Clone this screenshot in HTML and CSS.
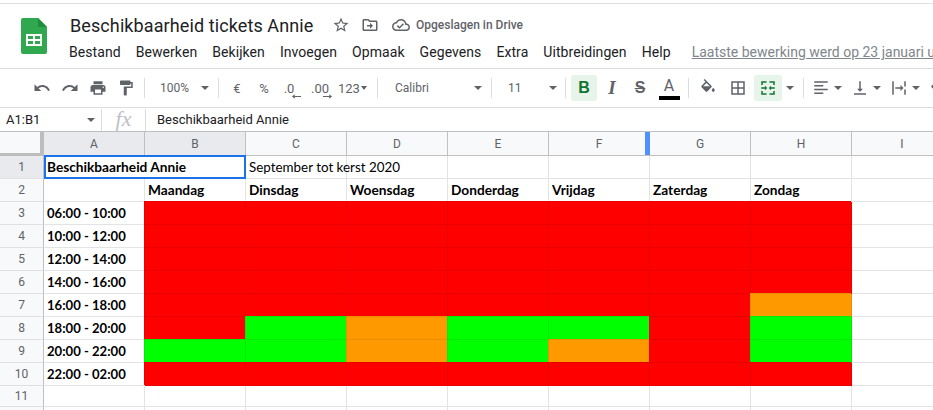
FILE: index.html
```html
<!DOCTYPE html>
<html lang="nl">
<head>
<meta charset="utf-8">
<title>Beschikbaarheid tickets Annie</title>
<link rel="stylesheet" href="styles.css">
</head>
<body>
<svg class="defs" aria-hidden="true">
<symbol id="undo" viewBox="0 0 24 24"><path d="M12.5 8c-2.65 0-5.05.99-6.9 2.6L2 7v9h9l-3.62-3.62c1.39-1.16 3.16-1.88 5.12-1.88 3.54 0 6.55 2.31 7.6 5.5l2.37-.78C21.08 11.03 17.15 8 12.5 8z"/></symbol>
<symbol id="redo" viewBox="0 0 24 24"><path d="M18.4 10.6C16.55 8.99 14.15 8 11.5 8c-4.65 0-8.58 3.03-9.96 7.22L3.9 16c1.05-3.19 4.05-5.5 7.6-5.5 1.95 0 3.73.72 5.12 1.88L13 16h9V7l-3.6 3.6z"/></symbol>
<symbol id="print" viewBox="0 0 24 24"><path d="M19 8H5c-1.66 0-3 1.34-3 3v6h4v4h12v-4h4v-6c0-1.66-1.34-3-3-3zm-3 11H8v-5h8v5zm3-7c-.55 0-1-.45-1-1s.45-1 1-1 1 .45 1 1-.45 1-1 1zm-1-9H6v4h12V3z"/></symbol>
<symbol id="paint" viewBox="0 0 24 24"><path d="M18 4V3c0-.55-.45-1-1-1H5c-.55 0-1 .45-1 1v4c0 .55.45 1 1 1h12c.55 0 1-.45 1-1V6h1v4H9v11c0 .55.45 1 1 1h2c.55 0 1-.45 1-1v-9h8V4h-3z"/></symbol>
<symbol id="star" viewBox="0 0 24 24"><path d="M22 9.24l-7.19-.62L12 2 9.19 8.63 2 9.24l5.46 4.73L5.82 21 12 17.27 18.18 21l-1.63-7.03L22 9.24zM12 15.4l-3.76 2.27 1-4.28-3.32-2.88 4.38-.38L12 6.1l1.71 4.04 4.38.38-3.32 2.88 1 4.28L12 15.4z"/></symbol>
<symbol id="move" viewBox="0 0 24 24"><path d="M20 6h-8l-2-2H4c-1.1 0-2 .9-2 2v12c0 1.1.9 2 2 2h16c1.1 0 2-.9 2-2V8c0-1.1-.9-2-2-2zm0 12H4V6h5.17l2 2H20v10zm-8-1l4-4-4-4v3H8v2h4v3z"/></symbol>
<symbol id="cloud" viewBox="0 0 24 24"><path d="M19.35 10.04C18.67 6.59 15.64 4 12 4 9.11 4 6.6 5.64 5.35 8.04 2.34 8.36 0 10.91 0 14c0 3.31 2.69 6 6 6h13c2.76 0 5-2.24 5-5 0-2.64-2.05-4.78-4.65-4.96zM19 18H6c-2.21 0-4-1.79-4-4 0-2.05 1.53-3.76 3.56-3.97l1.07-.11.5-.95C8.08 7.14 9.94 6 12 6c2.62 0 4.88 1.86 5.39 4.43l.3 1.5 1.53.11c1.56.1 2.78 1.41 2.78 2.96 0 1.65-1.35 3-3 3zm-9-3.82l-2.09-2.09L6.5 13.5 10 17l6.01-6.01-1.41-1.41z"/></symbol>
<symbol id="fill" viewBox="0 0 24 24"><path d="M16.56 8.94L7.62 0 6.21 1.41l2.38 2.38-5.15 5.15c-.59.59-.59 1.54 0 2.12l5.5 5.5c.29.29.68.44 1.06.44s.77-.15 1.06-.44l5.5-5.5c.59-.58.59-1.53 0-2.12zM5.21 10L10 5.21 14.79 10H5.21zM19 11.5s-2 2.17-2 3.5c0 1.1.9 2 2 2s2-.9 2-2c0-1.33-2-3.5-2-3.5z"/><path d="M4.5 10h11l-5.5 5.8z"/></symbol>
<symbol id="borders" viewBox="0 0 24 24"><path d="M3 3v18h18V3H3zm8 16H5v-6h6v6zm0-8H5V5h6v6zm8 8h-6v-6h6v6zm0-8h-6V5h6v6z"/></symbol>
<symbol id="merge" viewBox="0 0 24 24"><path d="M3 3h7v2H5v3H3zM14 3h7v5h-2V5h-5zM3 16h2v3h5v2H3zM19 16h2v5h-7v-2h5zM3 11h5V9l3 3-3 3v-2H3zM21 11h-5V9l-3 3 3 3v-2h5z"/></symbol>
<symbol id="align" viewBox="0 0 24 24"><path d="M3 3h18v2H3zM3 8h12v2H3zM3 13h18v2H3zM3 18h12v2H3z"/></symbol>
<symbol id="valign" viewBox="0 0 24 24"><path d="M11 3h2v10h3l-4 4-4-4h3zM4 19h16v2H4z"/></symbol>
<symbol id="wrap" viewBox="0 0 24 24"><path d="M3 3h2v18H3zM19 3h2v7h-2zM19 14h2v7h-2zM7 11h7V8l4 4-4 4v-3H7z"/></symbol>
</svg>

<header class="top">
  <svg class="logo" viewBox="0 0 26 36" aria-hidden="true">
    <path class="logo-sheet" d="M2 0h15l9 9v25a2 2 0 0 1-2 2H2a2 2 0 0 1-2-2V2a2 2 0 0 1 2-2z"/>
    <path class="logo-fold" d="M17 0l9 9h-9z"/>
    <path class="logo-grid" d="M5 16h16v12H5zm2 2v3h5v-3zm7 0v3h5v-3zm-7 5v3h5v-3zm7 0v3h5v-3z"/>
  </svg>
  <div class="head-main">
    <div class="title-row">
      <span class="title">Beschikbaarheid tickets Annie</span>
      <svg class="i i-star"><use href="#star"/></svg>
      <svg class="i i-move"><use href="#move"/></svg>
      <svg class="i i-cloud"><use href="#cloud"/></svg>
      <span class="saved">Opgeslagen in Drive</span>
    </div>
    <nav class="menu">
      <span>Bestand</span><span>Bewerken</span><span>Bekijken</span><span>Invoegen</span><span>Opmaak</span><span>Gegevens</span><span>Extra</span><span>Uitbreidingen</span><span>Help</span>
      <a class="last-edit">Laatste bewerking werd op 23 januari u</a>
    </nav>
  </div>
</header>

<div class="toolbar">
  <div class="tb"><svg class="i"><use href="#undo"/></svg></div>
  <div class="tb"><svg class="i"><use href="#redo"/></svg></div>
  <div class="tb"><svg class="i"><use href="#print"/></svg></div>
  <div class="tb"><svg class="i"><use href="#paint"/></svg></div>
  <div class="sep"></div>
  <div class="drop d-zoom"><span>100%</span><i class="arrow"></i></div>
  <div class="sep"></div>
  <div class="tb t-txt">€</div>
  <div class="tb t-txt t-narrow">%</div>
  <div class="tb t-dec"><span class="dec-less">.0</span><svg class="dec-arrow arrow-left" viewBox="0 0 10 5"><path d="M0 2.5L3 0v2h7v1H3v2z"/></svg></div>
  <div class="tb t-dec t-wide"><span>.00</span><svg class="dec-arrow arrow-right" viewBox="0 0 10 5"><path d="M10 2.5L7 0v2H0v1h7v2z"/></svg></div>
  <div class="num"><span>123</span><i class="arrow arrow-small"></i></div>
  <div class="sep"></div>
  <div class="drop d-font"><span>Calibri</span><i class="arrow"></i></div>
  <div class="sep"></div>
  <div class="drop d-size"><span>11</span><i class="arrow"></i></div>
  <div class="sep"></div>
  <div class="tb t-on t-b">B</div>
  <div class="tb t-i">I</div>
  <div class="tb t-s">S</div>
  <div class="tb t-color"><span>A</span><b class="bar"></b></div>
  <div class="sep sep-wide"></div>
  <div class="tb t-fill"><svg class="i"><use href="#fill"/></svg></div>
  <div class="tb t-borders"><svg class="i"><use href="#borders"/></svg></div>
  <div class="tb t-on t-merge"><svg class="i"><use href="#merge"/></svg></div>
  <div class="tb-arrow"><i class="arrow"></i></div>
  <div class="sep sep-align"></div>
  <div class="tb"><svg class="i"><use href="#align"/></svg></div>
  <div class="tb-arrow a-tight"><i class="arrow"></i></div>
  <div class="tb"><svg class="i"><use href="#valign"/></svg></div>
  <div class="tb-arrow a-tight"><i class="arrow"></i></div>
  <div class="tb"><svg class="i"><use href="#wrap"/></svg></div>
  <div class="tb-arrow a-tight"><i class="arrow"></i></div>
  <div class="tb"><svg class="i"><use href="#fill"/></svg></div>
</div>

<div class="formula">
  <div class="name"><span>A1:B1</span><i class="arrow"></i></div>
  <div class="fx">fx</div>
  <div class="value">Beschikbaarheid Annie</div>
</div>

<div class="sheet">
  <div class="ch corner"></div><div class="ch sel">A</div><div class="ch sel">B</div><div class="ch">C</div><div class="ch">D</div><div class="ch">E</div><div class="ch freeze">F</div><div class="ch">G</div><div class="ch">H</div><div class="ch">I</div>

  <div class="rh sel">1</div><div class="c b span2">Beschikbaarheid Annie<span class="selection"></span></div><div class="c">September tot kerst 2020</div><div class="c"></div><div class="c"></div><div class="c"></div><div class="c"></div><div class="c"></div><div class="c"></div>

  <div class="rh">2</div><div class="c"></div><div class="c b">Maandag</div><div class="c b">Dinsdag</div><div class="c b">Woensdag</div><div class="c b">Donderdag</div><div class="c b">Vrijdag</div><div class="c b">Zaterdag</div><div class="c b">Zondag</div><div class="c"></div>

  <div class="rh">3</div><div class="c b t">06:00 - 10:00</div><div class="c r"></div><div class="c r"></div><div class="c r"></div><div class="c r"></div><div class="c r"></div><div class="c r"></div><div class="c r"></div><div class="c"></div>

  <div class="rh">4</div><div class="c b t">10:00 - 12:00</div><div class="c r"></div><div class="c r"></div><div class="c r"></div><div class="c r"></div><div class="c r"></div><div class="c r"></div><div class="c r"></div><div class="c"></div>

  <div class="rh">5</div><div class="c b t">12:00 - 14:00</div><div class="c r"></div><div class="c r"></div><div class="c r"></div><div class="c r"></div><div class="c r"></div><div class="c r"></div><div class="c r"></div><div class="c"></div>

  <div class="rh">6</div><div class="c b t">14:00 - 16:00</div><div class="c r"></div><div class="c r"></div><div class="c r"></div><div class="c r"></div><div class="c r"></div><div class="c r"></div><div class="c r"></div><div class="c"></div>

  <div class="rh">7</div><div class="c b t">16:00 - 18:00</div><div class="c r"></div><div class="c r"></div><div class="c r"></div><div class="c r"></div><div class="c r"></div><div class="c r"></div><div class="c o"></div><div class="c"></div>

  <div class="rh">8</div><div class="c b t">18:00 - 20:00</div><div class="c r"></div><div class="c g"></div><div class="c o"></div><div class="c g"></div><div class="c g"></div><div class="c r"></div><div class="c g"></div><div class="c"></div>

  <div class="rh">9</div><div class="c b t">20:00 - 22:00</div><div class="c g"></div><div class="c g"></div><div class="c o"></div><div class="c g"></div><div class="c o"></div><div class="c r"></div><div class="c g"></div><div class="c"></div>

  <div class="rh">10</div><div class="c b t">22:00 - 02:00</div><div class="c r"></div><div class="c r"></div><div class="c r"></div><div class="c r"></div><div class="c r"></div><div class="c r"></div><div class="c r"></div><div class="c"></div>

  <div class="rh">11</div><div class="c"></div><div class="c"></div><div class="c"></div><div class="c"></div><div class="c"></div><div class="c"></div><div class="c"></div><div class="c"></div><div class="c"></div>

  <div class="rh"></div><div class="c"></div><div class="c"></div><div class="c"></div><div class="c"></div><div class="c"></div><div class="c"></div><div class="c"></div><div class="c"></div><div class="c"></div>
</div>
</body>
</html>
```
FILE: styles.css
```css
* { box-sizing: border-box; }
html, body { margin: 0; height: 410px; overflow: hidden; background: #fff; }
body { font-family: Roboto, "Liberation Sans", sans-serif; color: #3c4043; width: 933px; }
.defs { display: none; }
.i { width: 18px; height: 18px; fill: #5f6368; display: block; flex: none; }

.top { display: flex; height: 66px; margin-top: 3px; border-top: 1px solid #e0e0e0; border-bottom: 1px solid #dadce0; padding-left: 21px; white-space: nowrap; overflow: hidden; }
.logo { width: 26px; height: 36px; margin-top: 14px; flex: none; }
.logo-sheet { fill: #2fa84f; }
.logo-fold { fill: #1e8e3e; }
.logo-grid { fill: #fff; fill-rule: evenodd; }
.head-main { margin-left: 22px; min-width: 0; flex: 1; }
.title-row { display: flex; align-items: center; height: 33px; padding-top: 9px; }
.title { font-size: 18px; color: #202124; margin-left: 1px; width: 243px; letter-spacing: .1px; }
.i-star { margin-left: 19px; }
.i-move { margin-left: 11px; }
.i-cloud { margin-left: 13px; }
.saved { font-size: 12px; font-weight: 500; color: #5f6368; margin-left: 6px; }
.menu { display: flex; align-items: center; gap: 15px; font-size: 14px; letter-spacing: .07px; color: #202124; height: 22px; margin-top: 4px; }
.last-edit { color: #80868b; text-decoration: underline; margin-left: 6px; letter-spacing: 0; }

.toolbar { display: flex; align-items: center; height: 39px; padding-left: 28px; border-bottom: 1px solid #dadce0; white-space: nowrap; overflow: hidden; color: #5f6368; }
.tb { width: 28px; height: 26px; flex: none; display: flex; align-items: center; justify-content: center; border-radius: 3px; font-size: 13px; position: relative; }
.sep { width: 1px; height: 20px; background: #dadce0; flex: none; margin: 0 4px; }
.sep-wide { margin-left: 5px; }
.sep-align { margin-left: 5px; margin-right: 3px; }
.arrow { display: block; width: 0; height: 0; border: 4px solid transparent; border-top-color: #5f6368; border-bottom-width: 0; flex: none; }
.arrow-small { border-width: 4px 3.5px 0; }
.drop { display: flex; align-items: center; justify-content: space-between; font-size: 12px; flex: none; }
.d-zoom { width: 73px; padding: 0 9px 0 15px; margin: 0 -4px; }
.d-font { width: 113px; padding: 0 9px 0 17px; margin: 0 -4px; }
.d-size { width: 73px; padding: 0 8px 0 16px; margin: 0 -4px; }
.t-narrow { width: 26px; }
.t-dec { font-size: 13px; }
.dec-less { margin-left: -4px; }
.t-wide { margin-left: 1px; }
.dec-arrow { position: absolute; top: 19px; width: 9px; height: 5px; fill: #5f6368; }
.arrow-left { left: 15px; }
.arrow-right { left: 17px; }
.num { width: 39px; flex: none; display: flex; align-items: center; gap: 1px; padding-left: 4px; font-size: 13px; }
.t-on { background: #e6f4ea; color: #137333; }
.t-on .i { fill: #137333; }
.t-b { width: 26px; margin-left: 1px; font-family: "Liberation Sans", sans-serif; font-weight: 700; font-size: 16px; }
.t-i { margin-left: 1px; font: italic 700 19px "Liberation Serif", serif; }
.t-s { margin-right: 1px; font: 700 16px "Liberation Sans", sans-serif; text-decoration: line-through; }
.t-color { flex-direction: column; justify-content: flex-start; font-size: 16px; line-height: 21px; }
.bar { display: block; width: 21px; height: 4px; background: #000; }
.t-fill { margin-left: 1px; margin-right: 2px; }
.t-borders { margin-right: 2px; }
.tb-arrow { width: 16px; flex: none; display: flex; justify-content: center; }
.a-tight { width: 11px; justify-content: flex-start; }
.a-tight .arrow { margin-left: -1px; }

.formula { display: flex; align-items: center; height: 24px; border-bottom: 1px solid #bdc1c6; white-space: nowrap; }
.name { width: 102px; height: 22px; display: flex; align-items: center; justify-content: space-between; padding: 0 6px; font-size: 13px; border-right: 1px solid #dadce0; color: #202124; }
.fx { width: 44px; height: 22px; text-align: center; font: italic 22px/20px "Liberation Serif", serif; color: #bdc1c6; border-right: 1px solid #dadce0; }
.value { margin-left: 11px; font-size: 13px; color: #202124; }

.sheet { display: grid; grid-template-columns: 44px repeat(9, 101px); grid-template-rows: 24px repeat(10, 23px) 21px 23px; }
.ch, .rh { display: flex; align-items: center; justify-content: center; font-size: 12px; color: #5f6368; background: #f8f9fa; border-right: 1px solid #c0c0c0; border-bottom: 1px solid #c0c0c0; }
.rh { border-bottom-color: #e0e0e0; }
.ch.sel, .rh.sel { background: #e8eaed; }
.corner { background: #f8f9fa; border-right: 4px solid #bdbdbd; border-bottom: 3px solid #bdbdbd; }
.freeze { position: relative; }
.freeze::after { content: ""; position: absolute; right: -1px; top: 0; bottom: 0; width: 5px; background: #4d90fe; }
.c { display: flex; align-items: flex-end; padding: 0 2px 1px 3px; font-family: Lato, "Open Sans", sans-serif; font-size: 13.4px; line-height: 20px; color: #000; border-right: 1px solid #e2e3e3; border-bottom: 1px solid #e2e3e3; white-space: nowrap; }
.b { font-weight: 700; font-size: 13.7px; }
.t { font-size: 13.1px; }
.span2 { grid-column: span 2; position: relative; }
.selection { position: absolute; left: 0; top: -1px; right: -1px; bottom: -1px; border: 2px solid #1a73e8; }
.r { background: #f00; border-color: #eb0000; box-shadow: -1px -1px 0 #eb0000; }
.g { background: #0f0; border-color: #00eb00; box-shadow: -1px -1px 0 #00eb00; }
.o { background: #ff9900; border-color: #eb8d00; box-shadow: -1px -1px 0 #eb8d00; }
```
